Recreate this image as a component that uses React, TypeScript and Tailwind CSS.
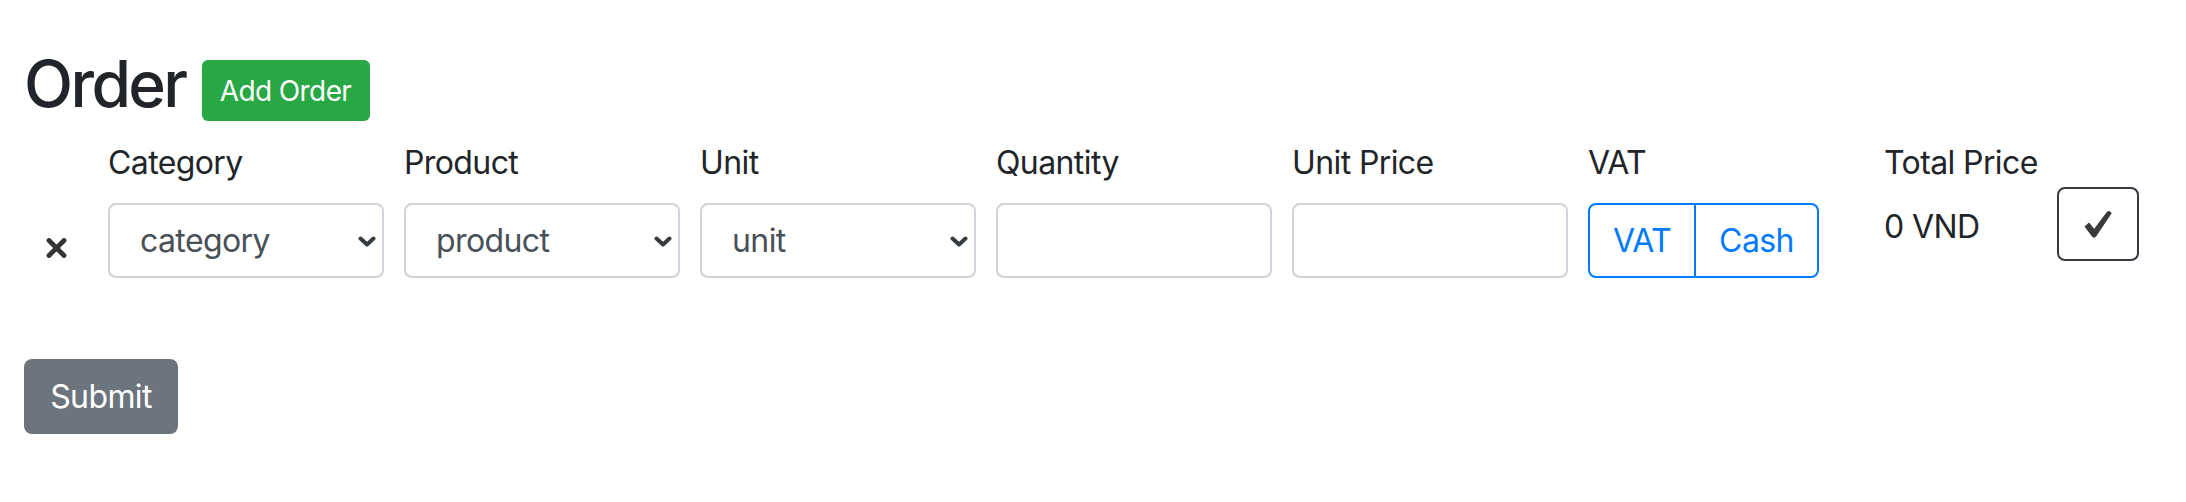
function Chevron() {
  return (
    <svg width="18" height="11" viewBox="0 0 18 11" className="pointer-events-none absolute right-[8px] top-[33px]">
      <path d="M2.5 2.5 L9 8.5 L15.5 2.5" fill="none" stroke="#343a40" strokeWidth="4" strokeLinecap="round" strokeLinejoin="round" />
    </svg>
  )
}

function SelectField({ label, value }: { label: string; value: string }) {
  return (
    <div className="w-[276px]">
      <label className="mb-[16px] block h-[48px] text-[32px] leading-[48px] tracking-[-0.6px]">{label}</label>
      <div className="relative">
        <select className="h-[75px] w-full appearance-none rounded-[8px] border-2 border-[#ced4da] bg-white pl-[30px] text-[32px] tracking-[-0.6px] text-[#495057] outline-none">
          <option>{value}</option>
        </select>
        <Chevron />
      </div>
    </div>
  )
}

function TextField({ label }: { label: string }) {
  return (
    <div className="w-[276px]">
      <label className="mb-[16px] block h-[48px] text-[32px] leading-[48px] tracking-[-0.6px]">{label}</label>
      <input type="text" className="h-[75px] w-full rounded-[8px] border-2 border-[#ced4da] bg-white px-[24px] text-[32px] outline-none" />
    </div>
  )
}

export default function App() {
  return (
    <div className="min-h-screen bg-white px-[24px] pt-[45px] font-[family-name:Inter,Liberation_Sans,sans-serif] text-[#212529]">
      <div className="flex items-end">
        <h2 className="text-[64px] font-medium leading-[77px] tracking-[-2.6px]">Order</h2>
        <button className="mb-[1px] ml-[16px] flex h-[61px] w-[168px] items-center justify-center rounded-[6px] bg-[#28a745] text-[28px] tracking-[-0.6px] text-white">
          Add Order
        </button>
      </div>

      <div className="mt-[17px] flex gap-[20px]">
        <div className="w-[64px] pl-[22px] pt-[99px]">
          <svg width="21" height="20" viewBox="0 0 21 20">
            <path d="M3 2.5 L18 17.5 M18 2.5 L3 17.5" stroke="#343434" strokeWidth="4.8" strokeLinecap="round" />
          </svg>
        </div>
        <SelectField label="Category" value="category" />
        <SelectField label="Product" value="product" />
        <SelectField label="Unit" value="unit" />
        <TextField label="Quantity" />
        <TextField label="Unit Price" />
        <div className="w-[276px]">
          <label className="mb-[16px] block h-[48px] text-[32px] leading-[48px] tracking-[-0.6px]">VAT</label>
          <div className="flex">
            <button className="flex h-[75px] w-[108px] items-center justify-center rounded-l-[8px] border-2 border-[#007bff] text-[32px] tracking-[-0.6px] text-[#007bff]">
              VAT
            </button>
            <button className="flex h-[75px] w-[123px] items-center justify-center rounded-r-[8px] border-2 border-l-0 border-[#007bff] text-[32px] tracking-[-0.6px] text-[#007bff]">
              Cash
            </button>
          </div>
        </div>
        <div className="w-[153px]">
          <label className="mb-[16px] block h-[48px] whitespace-nowrap text-[32px] leading-[48px] tracking-[-0.6px]">Total Price</label>
          <div className="text-[32px] leading-[48px] tracking-[-0.6px]">0 VND</div>
        </div>
        <div className="pt-[48px]">
          <button className="flex h-[74px] w-[82px] items-center justify-center rounded-[8px] border-2 border-[#343a40]">
            <svg width="30" height="28" viewBox="0 0 30 28">
              <path
                d="M2 16.5 L6 13 L11.2 19.5 L24.5 1.8 Q26.5 0.8 28.3 3 L12.8 26.3 Q11 28.2 9.4 26.4 Z"
                fill="#3a3a3a"
                stroke="#3a3a3a"
                strokeWidth="1"
                strokeLinejoin="round"
              />
            </svg>
          </button>
        </div>
      </div>

      <button className="mt-[81px] flex h-[75px] w-[154px] items-center justify-center rounded-[8px] bg-[#6c757d] text-[32px] tracking-[-0.6px] text-white">
        Submit
      </button>
    </div>
  )
}
